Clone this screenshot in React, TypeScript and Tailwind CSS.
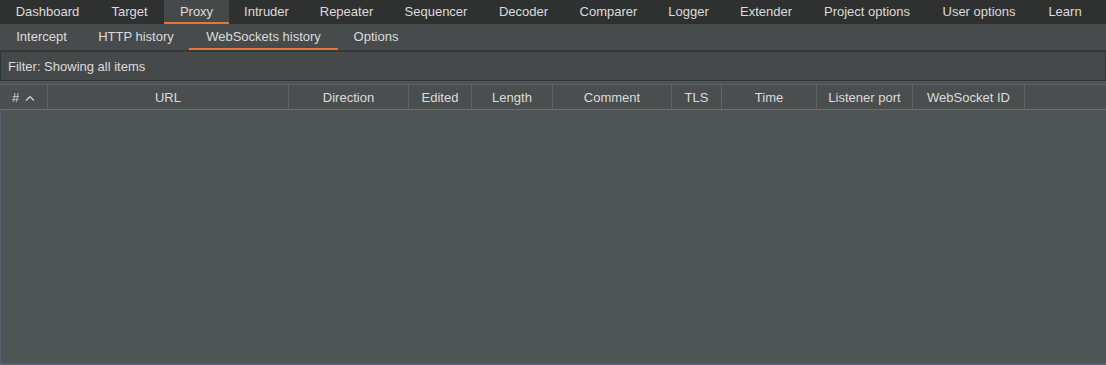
const topTabs = [
  { label: 'Dashboard', w: 95 },
  { label: 'Target', w: 69 },
  { label: 'Proxy', w: 65, active: true },
  { label: 'Intruder', w: 75 },
  { label: 'Repeater', w: 85 },
  { label: 'Sequencer', w: 94 },
  { label: 'Decoder', w: 81 },
  { label: 'Comparer', w: 89 },
  { label: 'Logger', w: 71 },
  { label: 'Extender', w: 84 },
  { label: 'Project options', w: 118 },
  { label: 'User options', w: 106 },
  { label: 'Learn', w: 66 },
]

const subTabs = [
  { label: 'Intercept', w: 83 },
  { label: 'HTTP history', w: 106 },
  { label: 'WebSockets history', w: 149, active: true },
  { label: 'Options', w: 76 },
]

const columns = [
  { label: '#', w: 48, sort: true },
  { label: 'URL', w: 241 },
  { label: 'Direction', w: 120 },
  { label: 'Edited', w: 63 },
  { label: 'Length', w: 81 },
  { label: 'Comment', w: 119 },
  { label: 'TLS', w: 50 },
  { label: 'Time', w: 95 },
  { label: 'Listener port', w: 96 },
  { label: 'WebSocket ID', w: 112 },
]

export default function App() {
  return (
    <div
      className="flex h-[365px] w-[1106px] flex-col overflow-hidden bg-[#4f5454] text-[13px] text-[#dcdcdc]"
      style={{ fontFamily: '"Liberation Sans", Arial, sans-serif' }}
    >
      {/* Main tabs */}
      <div className="flex h-[24px] shrink-0 bg-[#2f3131]">
        {topTabs.map((t) => (
          <div
            key={t.label}
            style={{ width: t.w }}
            className={`flex h-full items-center justify-center border-b-2 pb-[1px] pt-[3px] ${
              t.active ? 'border-[#e3763a] bg-[#464949]' : 'border-transparent'
            }`}
          >
            {t.label}
          </div>
        ))}
      </div>

      {/* Proxy sub tabs */}
      <div className="flex h-[27px] shrink-0 border-b border-[#3a3c3c] bg-[#484b4b]">
        {subTabs.map((t) => (
          <div
            key={t.label}
            style={{ width: t.w }}
            className={`flex h-full items-center justify-center border-b-2 pt-[2px] ${
              t.active ? 'border-[#e3763a]' : 'border-transparent'
            }`}
          >
            {t.label}
          </div>
        ))}
      </div>

      {/* Filter */}
      <div className="flex h-[30px] shrink-0 items-center border border-[#333535] bg-[#464949] pl-[7px] pt-[2px]">
        Filter: Showing all items
      </div>

      <div className="h-[3px] shrink-0 bg-[#4f5454]" />

      {/* Table header */}
      <div className="flex h-[26px] shrink-0 border-t border-[#5c5f70] border-b border-b-[#6b6e6e] bg-[#4b4e4e]">
        {columns.map((c) => (
          <div
            key={c.label}
            style={{ width: c.w }}
            className="flex h-full items-center justify-center gap-[6px] border-r border-[#626565] pt-[2px]"
          >
            <span>{c.label}</span>
            {c.sort && (
              <svg width="10" height="6" viewBox="0 0 10 6" fill="none">
                <path d="M1 5.5 L5 1.5 L9 5.5" stroke="#dcdcdc" strokeWidth="1.1" />
              </svg>
            )}
          </div>
        ))}
      </div>

      {/* Empty table body */}
      <div className="flex-1 border-b-2 border-l border-[#5c5f72] bg-[#4f5454]" />
    </div>
  )
}
